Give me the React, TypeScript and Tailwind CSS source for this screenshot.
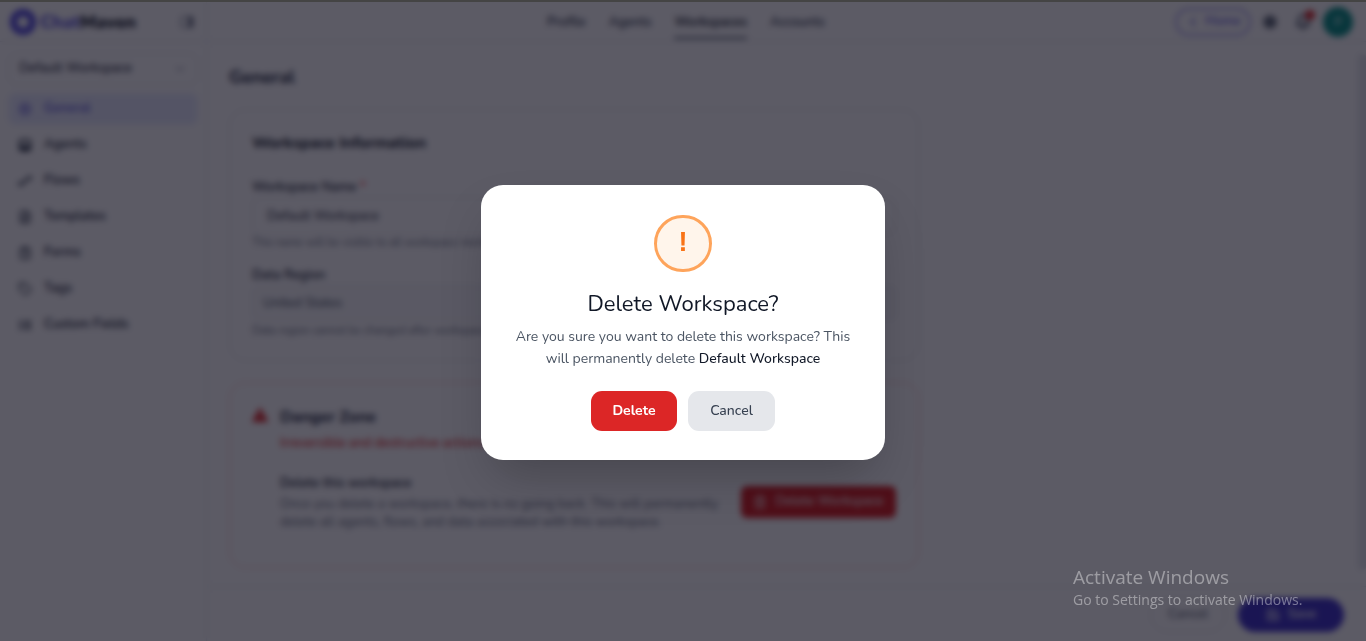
import React, { useState } from 'react';
import {
  Bell,
  ChevronDown,
  ChevronLeft,
  ClipboardList,
  FileText,
  Save,
  Settings,
  Tag,
  Trash2,
} from 'lucide-react';

interface IconProps {
  className?: string;
}

const AgentIcon: React.FC<IconProps> = ({ className }) => (
  <svg viewBox="0 0 24 24" className={className} fill="none" stroke="currentColor" strokeWidth="3">
    <rect x="3" y="3" width="18" height="18" rx="4" />
    <path d="M4 14h16v6H4z" fill="currentColor" stroke="none" />
    <path d="M8 9v2M16 9v2" strokeWidth="2" />
  </svg>
);

const FlowIcon: React.FC<IconProps> = ({ className }) => (
  <svg viewBox="0 0 24 24" className={className} fill="none" stroke="currentColor" strokeWidth="2">
    <circle cx="4" cy="17" r="3" />
    <circle cx="20" cy="7" r="3" />
    <path d="M7 17c6 0 2-7 10-9" strokeWidth="3" />
  </svg>
);

const FieldsIcon: React.FC<IconProps> = ({ className }) => (
  <svg viewBox="0 0 24 24" className={className} fill="none" stroke="currentColor" strokeWidth="3">
    <path d="M2 6h6M12 6h10M2 12h6M12 12h10M2 18h6M12 18h10" />
  </svg>
);

const PanelIcon: React.FC<IconProps> = ({ className }) => (
  <svg viewBox="0 0 24 24" className={className} fill="none" stroke="currentColor" strokeWidth="2">
    <rect x="2" y="3" width="20" height="18" rx="3" />
    <path d="M15 4h5v16h-5z" fill="currentColor" />
  </svg>
);

const NAV_ITEMS = [
  { label: 'General', icon: Settings },
  { label: 'Agents', icon: AgentIcon },
  { label: 'Flows', icon: FlowIcon },
  { label: 'Templates', icon: FileText },
  { label: 'Forms', icon: ClipboardList },
  { label: 'Tags', icon: Tag },
  { label: 'Custom Fields', icon: FieldsIcon },
];

const TABS = ['Profile', 'Agents', 'Workspaces', 'Accounts'];

const Sidebar: React.FC = () => (
  <aside className="w-[207px] shrink-0 border-r border-gray-200 flex flex-col">
    <div className="h-10 pl-2.5 pr-3 flex items-center border-b border-gray-200">
      <span className="w-[26px] h-[26px] rounded-full border-[7px] border-[#554de0]" />
      <span className="ml-1 text-lg font-extrabold text-gray-900">
        <span className="text-[#6059dc]">Chat</span>Maven
      </span>
      <button aria-label="Collapse sidebar" className="ml-auto text-gray-500">
        <PanelIcon className="w-3.5 h-3.5" />
      </button>
    </div>

    <div className="px-2 pt-[11px]">
      <button className="w-full h-8 px-2.5 rounded-lg border border-gray-200 flex items-center justify-between text-[13px] font-medium text-gray-800">
        Default Workspace
        <ChevronDown className="w-3.5 h-3.5 text-gray-400" />
      </button>
      <nav className="mt-2 flex flex-col gap-1">
        {NAV_ITEMS.map(({ label, icon: Icon }, i) => (
          <a
            key={label}
            href="#"
            className={`h-8 px-2.5 rounded-lg flex items-center gap-3 text-[13px] font-semibold ${
              i === 0 ? 'bg-[#e9ecff] text-[#605ad8]' : 'text-gray-800'
            }`}
          >
            <Icon className="w-3.5 h-3.5" />
            {label}
          </a>
        ))}
      </nav>
    </div>
  </aside>
);

const Header: React.FC = () => (
  <header className="h-10 shrink-0 pr-[13px] flex items-center border-b border-gray-200">
    <nav className="flex-1 h-full pl-[340px] flex items-start gap-[23px]">
      {TABS.map((tab) => (
        <a
          key={tab}
          href="#"
          className={`h-[37px] pt-1.5 flex items-center text-[13px] font-semibold border-b-2 ${
            tab === 'Workspaces' ? 'border-gray-600 text-gray-900' : 'border-transparent text-gray-700'
          }`}
        >
          {tab}
        </a>
      ))}
    </nav>
    <button className="w-[76px] h-7 rounded-full border-2 border-[#a9a4ee] flex items-center justify-center gap-1 text-[13px] font-semibold text-[#6d66e0]">
      <ChevronLeft className="w-4 h-4" />
      Home
    </button>
    <button aria-label="Settings" className="ml-3 text-gray-600">
      <Settings className="w-3.5 h-3.5" strokeWidth={4} />
    </button>
    <button aria-label="Notifications" className="relative ml-4.5 text-gray-700">
      <Bell className="w-4 h-4" strokeWidth={3} />
      <span className="absolute -top-1 -right-1 w-2.5 h-2.5 rounded-full bg-[#dc2626]" />
    </button>
    <span className="ml-3 w-[30px] h-[30px] rounded-full bg-[#0d9488] flex items-center justify-center text-xs text-white">
      P
    </span>
  </header>
);

const WorkspaceInfo: React.FC = () => (
  <section className="h-[252px] px-[22px] pt-[21px] rounded-2xl border border-gray-200">
    <h2 className="text-base leading-6 font-bold text-gray-900">Workspace Information</h2>
    <label htmlFor="ws-name" className="mt-[22px] block text-[13px] leading-5 font-semibold text-gray-800">
      Workspace Name <span className="text-red-500">*</span>
    </label>
    <input
      id="ws-name"
      defaultValue="Default Workspace"
      className="w-full h-[38px] px-3.5 rounded-lg border border-gray-200 text-[13px] text-gray-800"
    />
    <p className="text-[11px] leading-4 text-gray-500">
      This name will be visible to all workspace members
    </p>
    <label htmlFor="ws-region" className="mt-3.5 block text-[13px] leading-5 font-semibold text-gray-800">
      Data Region
    </label>
    <input
      id="ws-region"
      defaultValue="United States"
      disabled
      className="w-full h-[36px] px-2.5 rounded-lg border border-gray-200 bg-gray-50 text-[13px] text-gray-600"
    />
    <p className="mt-0.5 text-[11px] leading-4 text-gray-500">
      Data region cannot be changed after workspace creation
    </p>
  </section>
);

const DangerZone: React.FC = () => (
  <section className="mt-[21px] h-[186px] px-[22px] pt-[22px] rounded-2xl border border-red-200 flex gap-3">
    <svg viewBox="0 0 16 16" className="mt-0.5 w-4 h-4 shrink-0">
      <path d="M8 1 15.5 14.5H.5Z" fill="#dc2626" stroke="#dc2626" strokeLinejoin="round" />
      <path d="M8 6v4M8 12v1" stroke="#fff" strokeWidth="1" />
    </svg>
    <div className="flex-1">
      <h2 className="text-base leading-6 font-bold text-slate-800">Danger Zone</h2>
      <p className="mt-1 text-[13px] leading-5 font-medium text-[#dc2626]">
        Irreversible and destructive actions
      </p>
      <div className="mt-5 flex items-center justify-between">
        <div>
          <h3 className="text-[13px] leading-5 font-semibold text-gray-800">Delete this workspace</h3>
          <p className="mt-0.5 text-[13px] leading-[18px] text-gray-500">
            Once you delete a workspace, there is no going back. This will permanently
            <br />
            delete all agents, flows, and data associated with this workspace.
          </p>
        </div>
        <button className="w-[155px] h-8 shrink-0 rounded-md bg-[#dc2626] flex items-center justify-center gap-2 text-[13px] font-medium text-white">
          <Trash2 className="w-3.5 h-3.5" />
          Delete Workspace
        </button>
      </div>
    </div>
  </section>
);

interface DeleteDialogProps {
  workspace: string;
  onClose: () => void;
}

const DeleteDialog: React.FC<DeleteDialogProps> = ({ workspace, onClose }) => (
  <div className="fixed inset-0 z-40 pt-1 flex items-center justify-center bg-[#050312]/65 backdrop-blur-[3px]">
    <div
      role="dialog"
      aria-modal="true"
      aria-labelledby="dialog-title"
      className="w-[404px] px-5 pt-[30px] pb-[29px] rounded-[22px] bg-white shadow-2xl flex flex-col items-center text-center"
    >
      <div className="w-[58px] h-[57px] pb-0.5 rounded-full border-3 border-[#fea45b] bg-[#fff5eb] flex items-center justify-center font-['Liberation_Sans',sans-serif] text-[27px] font-bold text-[#f97316]">
        !
      </div>
      <h1 id="dialog-title" className="mt-4 text-[22px] leading-8 text-[#111827]">
        Delete Workspace?
      </h1>
      <p className="mt-1.5 text-sm leading-[22px] text-[#4b5563]">
        Are you sure you want to delete this workspace? This
        <br />
        will permanently delete <span className="font-medium text-[#111827]">{workspace}</span>
      </p>
      <div className="mt-[21px] flex gap-[11px]">
        <button
          onClick={onClose}
          className="w-[86px] h-10 rounded-[11px] bg-[#dc2626] text-sm font-bold text-white"
        >
          Delete
        </button>
        <button
          onClick={onClose}
          className="w-[87px] h-10 rounded-[11px] bg-[#e5e7eb] text-sm font-medium text-[#374151]"
        >
          Cancel
        </button>
      </div>
    </div>
  </div>
);

export default function App() {
  const [open, setOpen] = useState(true);

  return (
    <div className="h-screen flex flex-col overflow-hidden bg-white font-[Nunito,Lato,sans-serif]">
      <div className="h-0.5 shrink-0 relative z-50 bg-[#444444]" />
      <div className="flex-1 min-h-0 flex">
        <Sidebar />
        <div className="flex-1 min-w-0 flex flex-col">
          <Header />
          <div className="flex-1 min-h-0 flex">
            <main className="flex-1 px-[22px] pt-[23px] overflow-hidden">
              <h1 className="text-lg leading-6 font-bold text-slate-800">General</h1>
              <div className="mt-5 max-w-[690px]">
                <WorkspaceInfo />
                <DangerZone />
              </div>
            </main>
            <div className="w-2 mt-3 mb-4 rounded-full bg-gray-200" />
          </div>
          <footer className="h-[55px] shrink-0 pt-0.5 pr-[22px] border-t border-gray-200 flex items-center justify-end gap-3">
            <button className="w-[76px] h-[34px] rounded-full border border-gray-200 text-[13px] font-semibold text-gray-500">
              Cancel
            </button>
            <button className="w-[106px] h-[34px] rounded-full bg-[#4338ca] flex items-center justify-center gap-2 text-[13px] font-semibold text-white">
              <Save className="w-3.5 h-3.5" />
              Save
            </button>
          </footer>
        </div>
      </div>

      {open && <DeleteDialog workspace="Default Workspace" onClose={() => setOpen(false)} />}

      <div className="fixed right-[57px] bottom-8 z-50 w-[236px] text-white/40 font-['Open_Sans',sans-serif] pointer-events-none">
        <p className="text-[19px] leading-7">Activate Windows</p>
        <p className="text-[14px] leading-[18px]">Go to Settings to activate Windows.</p>
      </div>
    </div>
  );
}
